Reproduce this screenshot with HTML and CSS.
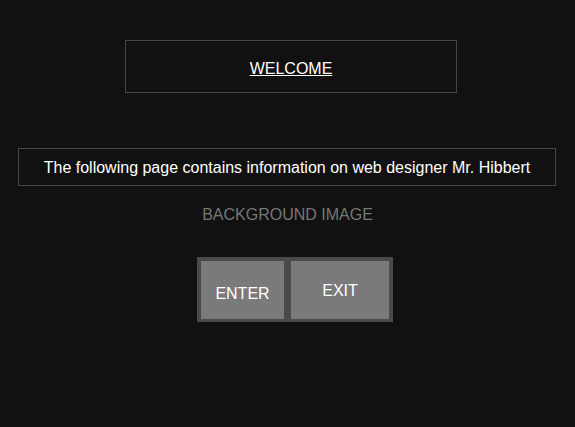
FILE: index.html
```html
<!DOCTYPE html>
<html>
<head>
<meta charset="utf-8">
<title>Welcome</title>
<link rel="stylesheet" href="styles.css">
</head>
<body>
  <div class="welcome"><a class="welcome-link" href="#">WELCOME</a></div>
  <div class="info">The following page contains information on web designer Mr. Hibbert</div>
  <div class="bg-label">BACKGROUND IMAGE</div>
  <div class="actions">
    <div class="btn btn-enter">ENTER</div>
    <div class="btn btn-exit">EXIT</div>
  </div>
</body>
</html>
```

FILE: styles.css
```css
html, body {
  margin: 0;
  padding: 0;
  background: #111111;
}
body {
  font-family: "Liberation Sans", Arial, sans-serif;
  font-size: 16px;
  line-height: 18px;
  color: #ffffff;
  padding-top: 40px;
  height: 387px;
  overflow: hidden;
}
.welcome {
  box-sizing: border-box;
  margin-left: 125px;
  width: 332px;
  height: 53px;
  border: 1px solid #464646;
  padding-top: 19px;
  text-align: center;
}
.welcome-link {
  color: #ffffff;
  text-decoration: underline;
}
.info {
  box-sizing: border-box;
  margin-top: 55px;
  margin-left: 18px;
  width: 538px;
  height: 38px;
  border: 1px solid #464646;
  padding-top: 10px;
  text-align: center;
}
.bg-label {
  margin-top: 20px;
  text-align: center;
  color: #777777;
}
.actions {
  display: flex;
  gap: 7px;
  margin-top: 33px;
  margin-left: 197px;
  width: 196px;
  height: 65px;
  box-sizing: border-box;
  padding: 4px 4px 3px 4px;
  background: #4a4a4a;
}
.btn {
  box-sizing: border-box;
  height: 58px;
  background: #7a7a7a;
  color: #ffffff;
  text-align: center;
}
.btn-enter {
  width: 83px;
  padding-top: 24px;
}
.btn-exit {
  width: 98px;
  padding-top: 21px;
}
```
